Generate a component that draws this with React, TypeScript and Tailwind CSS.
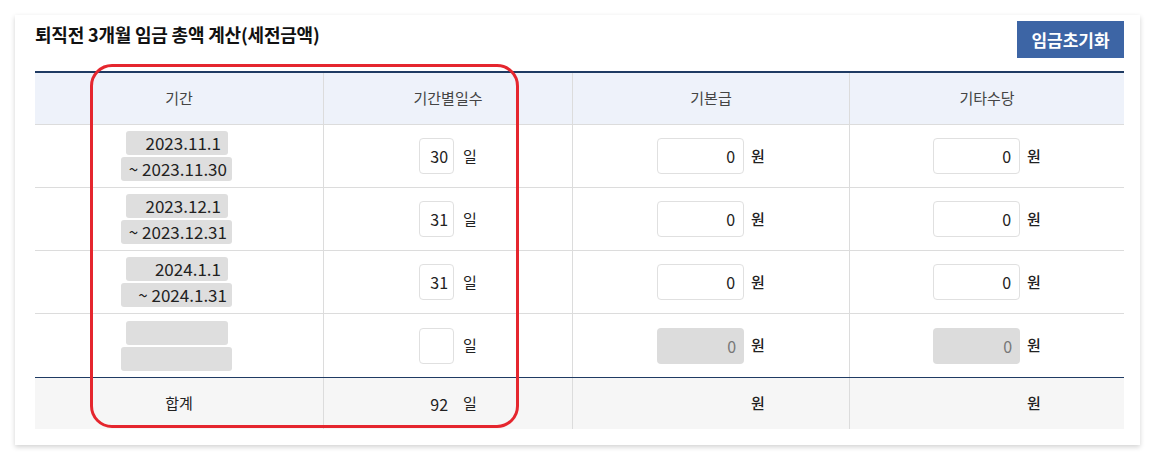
import React from 'react';

interface WageRow {
    from: string;
    to: string;
    days: string;
    base: string;
    extra: string;
    disabled?: boolean;
}

const rows: WageRow[] = [
    { from: '2023.11.1', to: '~ 2023.11.30', days: '30', base: '0', extra: '0' },
    { from: '2023.12.1', to: '~ 2023.12.31', days: '31', base: '0', extra: '0' },
    { from: '2024.1.1', to: '~ 2024.1.31', days: '31', base: '0', extra: '0' },
    { from: '', to: '', days: '', base: '0', extra: '0', disabled: true },
];

const cols = 'grid grid-cols-[288px_249px_277px_275px]';

const DayBox: React.FC<{ value: string }> = ({ value }) => (
    <div className="flex items-center gap-[9px]">
        <div className="w-[35px] h-[36px] rounded-[4px] border border-[#e0e0e0] bg-white flex items-center justify-end pr-[5px] text-[16px] text-[#222]">
            {value}
        </div>
        <span className="text-[15px] text-[#222]">일</span>
    </div>
);

const MoneyBox: React.FC<{ value: string; disabled?: boolean }> = ({ value, disabled }) => (
    <div className="flex items-center gap-[7px]">
        <div
            className={
                disabled
                    ? 'w-[87px] h-[36px] rounded-[4px] bg-[#dcdcdc] flex items-center justify-end pr-[8px] text-[16px] text-[#777]'
                    : 'w-[87px] h-[36px] rounded-[4px] border border-[#e0e0e0] bg-white flex items-center justify-end pr-[8px] text-[16px] text-[#222]'
            }
        >
            {value}
        </div>
        <span className="text-[15px] font-medium text-[#222]">원</span>
    </div>
);

const App: React.FC = () => {
    return (
        <div className="min-h-screen bg-white p-[15px] pr-[16px]" style={{ fontFamily: '"Noto Sans CJK KR", "Noto Sans", sans-serif' }}>
            <div className="relative bg-white shadow-[0_2px_5px_rgba(0,0,0,0.18)] pt-[6px] pl-[20px] pr-[16px] pb-[16px]">
                <div className="flex items-start justify-between">
                    <h2 className="mt-[1px] text-[18px] leading-6 font-bold tracking-[-0.2px] text-[#111]">퇴직전 3개월 임금 총액 계산(세전금액)</h2>
                    <button className="w-[107px] h-[37px] bg-[#3d65a5] text-white font-bold text-[17px]">임금초기화</button>
                </div>

                <div className="mt-[13px] border-t-2 border-[#1f3b63]">
                    <div className={`${cols} h-[52px] bg-[#eef2fa] border-b border-[#dcdcdc] text-[15px] text-[#444]`}>
                        <div className="flex items-center justify-center">기간</div>
                        <div className="flex items-center justify-center border-l border-[#dcdcdc]">기간별일수</div>
                        <div className="flex items-center justify-center border-l border-[#dcdcdc]">기본급</div>
                        <div className="flex items-center justify-center border-l border-[#dcdcdc]">기타수당</div>
                    </div>

                    {rows.map((r, i) => (
                        <div key={i} className={`${cols} ${i === rows.length - 1 ? 'h-[64px] border-b border-[#1f3b63]' : 'h-[63px] border-b border-[#dcdcdc]'}`}>
                            <div className="flex flex-col items-center justify-center gap-[2px] text-[17px] text-[#222]">
                                <div className="w-[102px] h-[24px] rounded-[3px] bg-[#dedede] flex items-center justify-end pr-[7px] ml-[-4px]">{r.from}</div>
                                <div className="w-[111px] h-[24px] rounded-[3px] bg-[#dedede] flex items-center justify-end pr-[5px] ml-[-5px]">{r.to}</div>
                            </div>
                            <div className="flex items-center justify-center border-l border-[#dcdcdc]">
                                <DayBox value={r.days} />
                            </div>
                            <div className="flex items-center justify-center border-l border-[#dcdcdc]">
                                <MoneyBox value={r.base} disabled={r.disabled} />
                            </div>
                            <div className="flex items-center justify-center border-l border-[#dcdcdc]">
                                <MoneyBox value={r.extra} disabled={r.disabled} />
                            </div>
                        </div>
                    ))}

                    <div className={`${cols} h-[51px] bg-[#f6f6f6] text-[15px] text-[#222]`}>
                        <div className="flex items-center justify-center">합계</div>
                        <div className="flex items-center justify-center border-l border-[#dcdcdc]">
                            <div className="flex items-center gap-[9px]">
                                <span className="w-[35px] text-right pr-[6px] text-[16px]">92</span>
                                <span>일</span>
                            </div>
                        </div>
                        <div className="flex items-center justify-center border-l border-[#dcdcdc]">
                            <div className="flex items-center gap-[7px]">
                                <span className="w-[87px]" />
                                <span className="font-medium">원</span>
                            </div>
                        </div>
                        <div className="flex items-center justify-center border-l border-[#dcdcdc]">
                            <div className="flex items-center gap-[7px]">
                                <span className="w-[87px]" />
                                <span className="font-medium">원</span>
                            </div>
                        </div>
                    </div>
                </div>

                <div className="pointer-events-none absolute left-[75px] top-[49px] w-[429px] h-[364px] rounded-[22px] border-[3px] border-[#e5262e]" />
            </div>
        </div>
    );
};

export default App;
